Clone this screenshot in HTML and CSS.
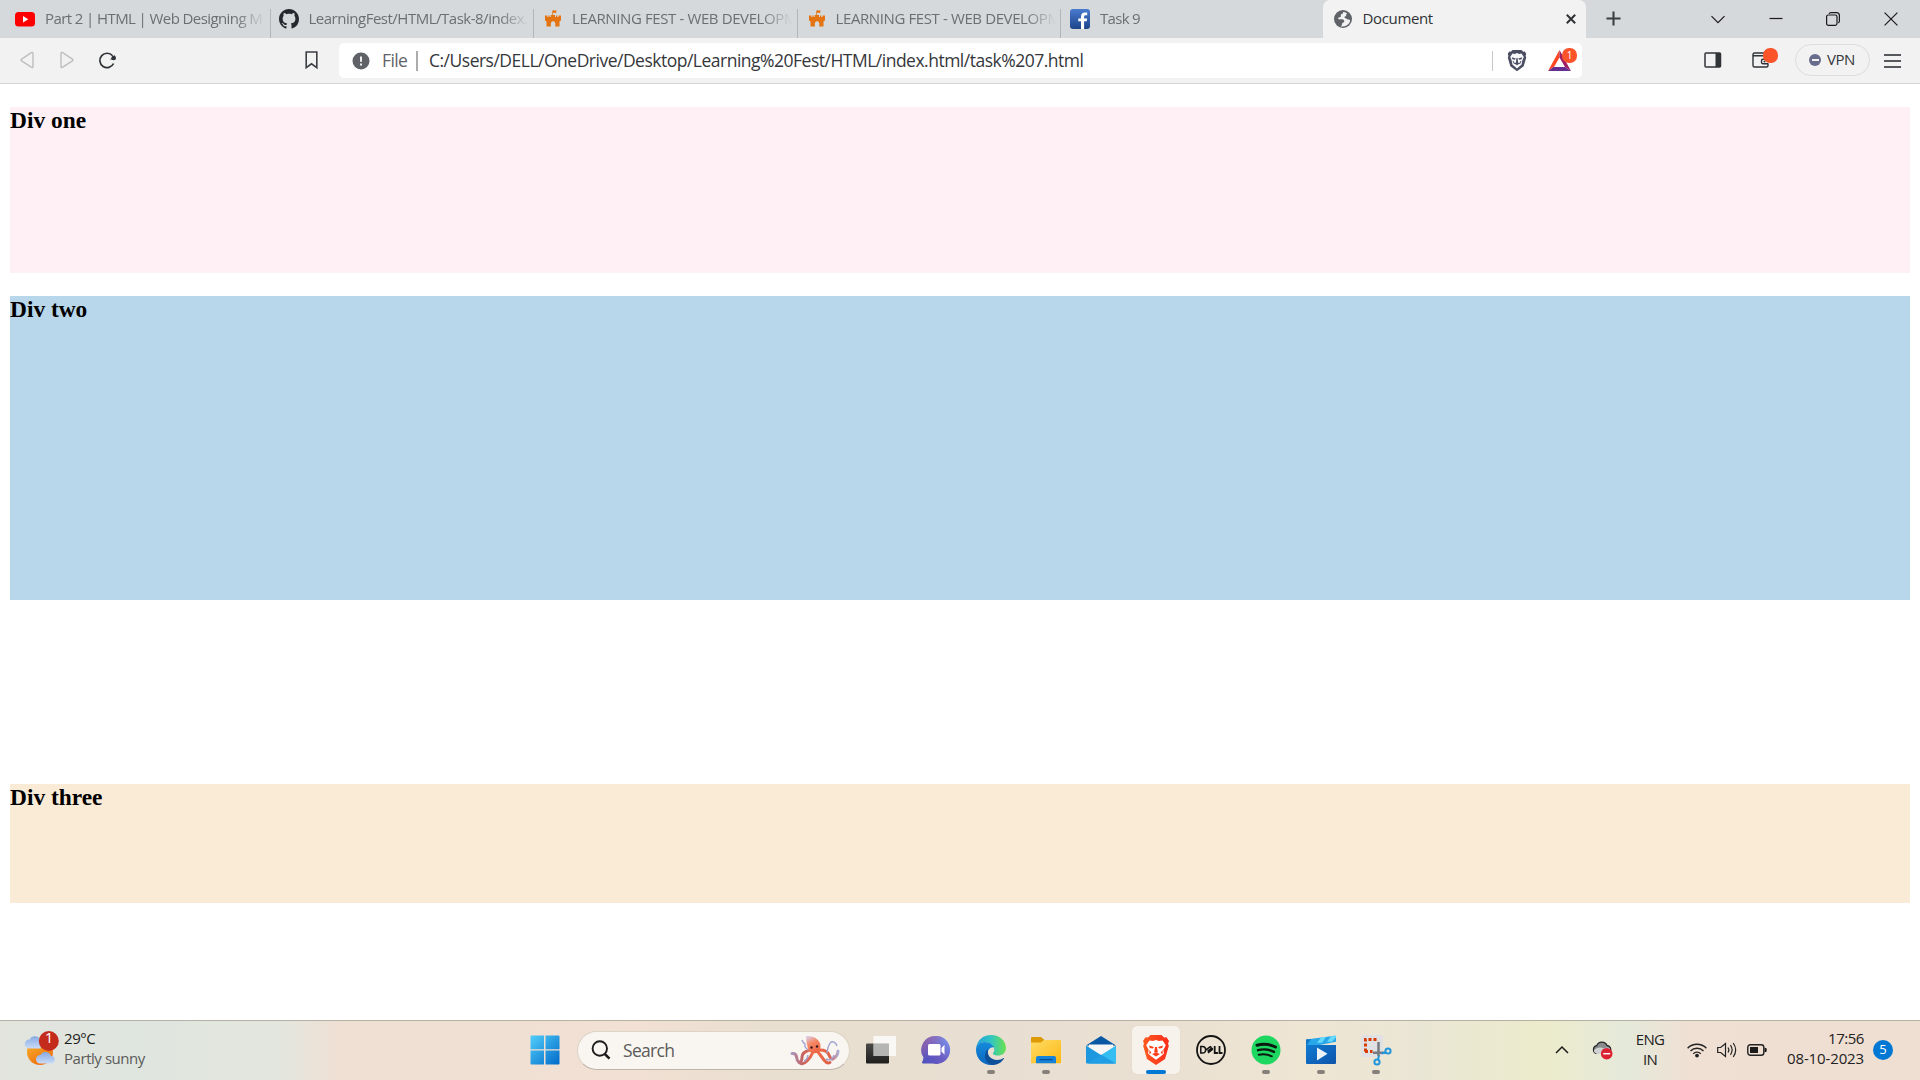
FILE: index.html
```html
<!DOCTYPE html>
<html lang="en">
<head>
<meta charset="utf-8">
<title>Document</title>
<link rel="stylesheet" href="styles.css">
</head>
<body>
<div class="tabs">
  <div class="tab">
    <svg class="fav" viewBox="0 0 20 20"><rect x="0" y="3" width="20" height="14.5" rx="3.5" fill="#f00"/><path d="M8 7l5.3 3.2L8 13.4z" fill="#fff"/></svg>
    <span class="tab-title t-part">Part 2 | HTML | Web Designing M</span>
  </div>
  <div class="tab">
    <svg class="fav" viewBox="0 0 16 16"><path fill="#24292f" d="M8 0C3.58 0 0 3.58 0 8c0 3.54 2.29 6.53 5.47 7.59.4.07.55-.17.55-.38 0-.19-.01-.82-.01-1.49-2.01.37-2.53-.49-2.69-.94-.09-.23-.48-.94-.82-1.13-.28-.15-.68-.52-.01-.53.63-.01 1.08.58 1.23.82.72 1.21 1.87.87 2.33.66.07-.52.28-.87.51-1.07-1.78-.2-3.64-.89-3.64-3.95 0-.87.31-1.59.82-2.15-.08-.2-.36-1.02.08-2.12 0 0 .67-.21 2.2.82.64-.18 1.32-.27 2-.27s1.36.09 2 .27c1.53-1.04 2.2-.82 2.2-.82.44 1.1.16 1.92.08 2.12.51.56.82 1.27.82 2.15 0 3.07-1.87 3.75-3.65 3.95.29.25.54.73.54 1.48 0 1.07-.01 1.93-.01 2.2 0 .21.15.46.55.38A8.01 8.01 0 0 0 16 8c0-4.42-3.58-8-8-8z"/></svg>
    <span class="tab-title t-learn">LearningFest/HTML/Task-8/index.</span>
  </div>
  <div class="tab">
    <svg class="fav castle" viewBox="0 0 20 20"><path fill="#e37411" d="M9.300 1.500c1.400-1 2.600.6 4-.4v2.600c-1.400 1-2.200-.2-3.200.3v2h1.900v2h1v-1.500h1.200v1.500h1.300v-1.500H18v5l-1.500 1V17.500h-4.200v-3a2.200 2.200 0 0 0-4.400 0v3H3.500v-5l-1.500-1v-5h2.300V8h1.200V6.500h1.200V8h1V6h1.600z"/></svg>
    <span class="tab-title t-fest">LEARNING FEST - WEB DEVELOPM</span>
  </div>
  <div class="tab">
    <svg class="fav castle" viewBox="0 0 20 20"><path fill="#e37411" d="M9.300 1.500c1.400-1 2.600.6 4-.4v2.600c-1.400 1-2.200-.2-3.200.3v2h1.900v2h1v-1.500h1.200v1.500h1.300v-1.500H18v5l-1.500 1V17.500h-4.200v-3a2.200 2.200 0 0 0-4.400 0v3H3.500v-5l-1.500-1v-5h2.300V8h1.200V6.500h1.200V8h1V6h1.600z"/></svg>
    <span class="tab-title t-fest">LEARNING FEST - WEB DEVELOPM</span>
  </div>
  <div class="tab fb">
    <svg class="fav" viewBox="0 0 20 20"><defs><linearGradient id="fb" x2="0" y2="1"><stop stop-color="#4a7bd0"/><stop offset="1" stop-color="#1c4489"/></linearGradient></defs><rect width="20" height="20" rx="3" fill="url(#fb)"/><path fill="#fff" d="M11 20v-7.700H8.300V9.500H11V7.600C11 4.800 12.600 3.500 15 3.500h2.200v2.800h-1.600c-1.200 0-1.500.6-1.500 1.500v1.700h3l-.4 2.800h-2.600V20z"/></svg>
    <span class="tab-title t-nine">Task 9</span>
  </div>
  <div class="tab active">
    <svg class="fav" viewBox="0 0 20 20"><circle cx="10" cy="10" r="9" fill="#5f6368"/><path fill="#f2f2f2" d="M9.500 2.800c1 .2.700 1.500 0 2-.8.400-1.800.4-1.700 1.500.2 1 .4 1.300-.5 1.800-1 .5-1.600.2-2.100 1.100-.3.700.6 1.200 1.600 1.200 1.600 0 3.500-.3 4.300 1.100.7 1.200-.3 1.900-1.400 2.200-.9.400-.4 1.500-.8 2.400-.3.700-1 1.100-1.600.8l1.400.5c2.900.3 6.300-1.300 7.900-4 .6-1.100.5-2.300.1-2.700-.7-.5-2 .1-2.800-.7-.9-.8-2.300-.8-2.500-1.700-.2-1 1.600-.9 1.800-1.900.2-.8 0-1.400.8-1.900-1-.9-3-1.700-4.500-1.700z"/></svg>
    <span class="tab-title t-doc">Document</span>
    <svg class="tab-close" viewBox="0 0 10 10"><path d="M.8.8l8.400 8.400M9.200.8L.8 9.200" stroke="#303236" stroke-width="2"/></svg>
  </div>
  <svg class="plus" viewBox="0 0 16 16"><path d="M8 .5v15M.5 8h15" stroke="#3b3e42" stroke-width="2.200"/></svg>
  <div class="win">
    <svg viewBox="0 0 14 14"><path d="M.5 4.200L7 10.700l6.500-6.500"/></svg>
    <svg viewBox="0 0 14 14"><path d="M.5 6.500h13"/></svg>
    <svg viewBox="0 0 14 14"><rect x=".6" y="3" width="10.400" height="10.400" rx="1.800"/><path d="M3 1.800Q3.600.6 5 .6h5.500q2.900 0 2.900 2.900V9q0 1.500-1.200 2"/></svg>
    <svg viewBox="0 0 14 14"><path d="M.6.6l12.800 12.800M13.400.6L.6 13.400"/></svg>
  </div>
</div>

<div class="toolbar">
  <svg class="nav" viewBox="0 0 18 18"><path d="M13.300 1.600Q15 .8 15 2.600v12.800q0 1.800-1.700.8L3.600 9.800q-1.200-.8 0-1.600z" fill="none" stroke="#bdbec0" stroke-width="1.400"/></svg>
  <svg class="nav" viewBox="0 0 18 18"><path d="M4.700 1.600Q3 .8 3 2.600v12.800q0 1.800 1.700.8l9.700-6.400q1.200-.8 0-1.600z" fill="none" stroke="#bdbec0" stroke-width="1.400"/></svg>
  <svg class="nav" viewBox="0 0 18 18"><path d="M15.600 12.500A7.200 7.200 0 1 1 14.600 4.800" fill="none" stroke="#2f3237" stroke-width="1.700"/><circle cx="15.700" cy="7" r="2.300" fill="#2f3237"/><path d="M17 4v4.500h-5z" fill="#2f3237"/></svg>
  <svg class="bookmark" viewBox="0 0 13 18"><path d="M1.200 1h10.600v15.600L6.500 12.800 1.200 16.600z" fill="none" stroke="#3b3e44" stroke-width="1.600"/></svg>
  <div class="url">
    <svg class="info" viewBox="0 0 18 18"><circle cx="9" cy="9" r="8.500" fill="#5f6368"/><path d="M9 4.500v5.300M9 11.400v2" stroke="#fff" stroke-width="1.800"/></svg>
    <span class="file">File</span>
    <i class="bar"></i>
    <span class="path">C:/Users/DELL/OneDrive/Desktop/Learning%20Fest/HTML/index.html/task%207.html</span>
    <i class="bar thin"></i>
    <svg class="shield" viewBox="0 0 20 23"><path d="M5.500 1h9l1.700 1.800 1.600-.2 1.500 2.500-.7 1.600.6 2-2.500 8.500L10 22.300l-6.700-5.100L.8 8.700l.6-2-.7-1.600 1.500-2.500 1.600.2z" fill="#4b4d63"/><path d="M5.500 4.500l2.300.5L10 4l2.200 1 2.300-.5 2.300 3.500-1.400 3.200-.8 4.300L10 19.400l-4.600-3.900-.8-4.300L3.200 8z" fill="#f8f8fa"/><path d="M4.800 8.200l4 1.400-1 1.100-2.400-.4zM15.200 8.200l-4 1.400 1 1.100 2.400-.4zM9.400 9h1.200l.5 4.600h-2.200zM7 14.200l3-.9 3 .9-3 2.100z" fill="#4b4d63"/><path d="M6 12l1.500 3M14 12l-1.500 3" stroke="#4b4d63"/></svg>
    <div class="bat">
      <svg viewBox="0 0 23 21"><path d="M11.500 0v7.500L6 17H5.500L0 21z" fill="#ff4724"/><path d="M11.500 0L23 21l-6-4-5.500-9.500z" fill="#9e1f63"/><path d="M0 21l5.500-4h11.500l6 4z" fill="#662d91"/></svg>
      <b class="badge">1</b>
    </div>
  </div>
  <svg class="side" viewBox="0 0 18 16"><rect x="1" y="1" width="15.500" height="14" rx="1" fill="none" stroke="#303338" stroke-width="1.500"/><path d="M11.500 1h5v14h-5z" fill="#303338"/></svg>
  <div class="wallet">
    <svg viewBox="0 0 18 16"><path d="M16 5V3.500M1 2.500v11q0 1.500 1.500 1.500h12q1.500 0 1.500-1.500V12M1 2.500Q1 1 2.500 1H15M1 3.800h15V7M16.500 7.200H11q-1.500 0-1.500 1.500v1.600q0 1.500 1.500 1.500h5.500" fill="none" stroke="#303338" stroke-width="1.400"/><circle cx="12.500" cy="9.500" r="1" fill="#303338"/></svg>
    <b class="badge"></b>
  </div>
  <div class="vpn"><i></i><span>VPN</span></div>
  <div class="menu"><i></i><i></i><i></i></div>
</div>

<main class="page">
  <section class="box one"><h3>Div one</h3></section>
  <section class="box two"><h3>Div two</h3></section>
  <section class="box three"><h3>Div three</h3></section>
</main>

<footer class="taskbar">
  <div class="weather">
    <svg viewBox="0 0 36 36"><defs><linearGradient id="sun" x1="0" y1="0" x2=".6" y2="1"><stop stop-color="#f9b82b"/><stop offset="1" stop-color="#ee6f12"/></linearGradient><linearGradient id="cl" x2="0" y2="1"><stop stop-color="#87a9e2"/><stop offset="1" stop-color="#c9dcf8"/></linearGradient></defs><circle cx="16" cy="21" r="13" fill="url(#sun)"/><path d="M5 17.500a4.500 4.500 0 0 1 .5-9 6 6 0 0 1 11.200 1.200V17.500z" fill="url(#cl)"/><path d="M16 32.500a4.200 4.200 0 0 1 .4-8.400 5.800 5.800 0 0 1 10.600 1 3.700 3.700 0 0 1 0 7.400z" fill="url(#cl)"/><circle cx="24.800" cy="10" r="10" fill="#c42b1c"/></svg>
    <b class="alert">1</b>
    <div class="lines"><span class="deg">29°C</span><span class="sunny">Partly sunny</span></div>
  </div>

  <svg class="start" viewBox="0 0 30 30"><defs><linearGradient id="win" gradientUnits="userSpaceOnUse" x1="0" y1="0" x2="30" y2="30"><stop stop-color="#52d0fb"/><stop offset="1" stop-color="#0068c8"/></linearGradient></defs><path d="M1.500.5H14v13.700H.5V1.500q0-1 1-1zM15.500.5H28.500q1 0 1 1v12.700h-14zM.5 15.600H14v13.900H1.500q-1 0-1-1zM15.500 15.600h14v12.900q0 1-1 1h-13z" fill="url(#win)"/></svg>
  <div class="search">
    <svg class="lens" viewBox="0 0 20 20"><circle cx="8.800" cy="8.500" r="7.200" fill="none" stroke="#1d1d1d" stroke-width="1.900"/><path d="M13.800 14l4.700 4.700" stroke="#1d1d1d" stroke-width="2.500"/></svg>
    <span>Search</span>
    <svg class="octo" viewBox="0 0 48 30"><defs><linearGradient id="oc" x1=".2" x2=".7" y2="1"><stop stop-color="#dccbe6"/><stop offset=".4" stop-color="#f58a68"/><stop offset="1" stop-color="#ee6440"/></linearGradient><linearGradient id="arm" gradientUnits="userSpaceOnUse" x1="0" x2="48" y1="0" y2="0"><stop stop-color="#a99bc4"/><stop offset=".25" stop-color="#c8605c"/><stop offset=".5" stop-color="#f4704a"/><stop offset=".8" stop-color="#dd6048"/><stop offset="1" stop-color="#a9b4dd"/></linearGradient></defs><g fill="none" stroke-linecap="round" stroke="url(#arm)"><path d="M19 15Q11 17 11 22T8 27.500Q6 26 5.500 22T1 18.500M22 17q-2 5-6 9t-7 2M27 17q3 4 6 8t6 2.500M29 15q7 0 9 5t4 4q5-3 5-8" stroke-width="3"/></g><path d="M18 15q-5-2-4-6-2-1-3-4M36 18q1-8 4-11 4-1 6 4M35 24q6 3 8-4M17 20q-1 5-4 6" fill="none" stroke="#a3a3d2" stroke-width="1.400"/><path d="M15 1q10-1 14 7 2 7-3 10-8 1-9-4-2-7-2-13z" fill="url(#oc)"/><circle cx="20.500" cy="12.500" r="1.200" fill="#351a22"/><circle cx="26" cy="11.500" r="1.200" fill="#351a22"/></svg>
  </div>
  <nav class="apps">
    <div class="app"><svg viewBox="0 0 30 30"><defs><linearGradient id="dk" x2="0" y2="1"><stop stop-color="#4a4a48"/><stop offset="1" stop-color="#1e1e1d"/></linearGradient></defs><rect y="8.500" width="23" height="20" rx="1" fill="url(#dk)"/><path d="M8.500 1h20.500q1 0 1 1v18q0 1-1 1H7.500V2q0-1 1-1z" fill="#fff" fill-opacity=".78"/><path d="M7.500 8.500H23V21H7.500z" fill="#a9a9a7" fill-opacity=".75"/></svg></div>
    <div class="app"><svg viewBox="0 0 30 30"><defs><linearGradient id="tm" x1="0" y1="1" x2="1" y2="0"><stop stop-color="#4a50bd"/><stop offset=".45" stop-color="#6b5bc2"/><stop offset="1" stop-color="#7d9cf2"/></linearGradient><linearGradient id="tm2" x2="1" y2="1"><stop stop-color="#9c66a4"/><stop offset=".5" stop-color="#9c66a4" stop-opacity="0"/></linearGradient></defs><path d="M15.500 1a14 14 0 1 1-4 27.500H2q-1 0-1-1 1-2 1.500-5A14 14 0 0 1 15.500 1z" fill="url(#tm)"/><path d="M15.500 1a14 14 0 1 1-4 27.500H2q-1 0-1-1 1-2 1.500-5A14 14 0 0 1 15.500 1z" fill="url(#tm2)"/><rect x="7" y="9" width="12.500" height="11.500" rx="1.500" fill="#fff"/><path d="M20.500 13l3-3.200v10l-3-3.200z" fill="#fff"/></svg></div>
    <div class="app run"><svg viewBox="0 0 30 30"><defs><linearGradient id="e1" x2="1"><stop stop-color="#239edb"/><stop offset=".5" stop-color="#31c5c1"/><stop offset="1" stop-color="#6ae24e"/></linearGradient><linearGradient id="e2" x2="0" y2="1"><stop stop-color="#158bdc"/><stop offset="1" stop-color="#0b66bd"/></linearGradient></defs><path d="M0 14C1 5 7 0 15 0c9 0 15 6 15 13 0 5-4 7.500-8 7.500-4 0-5.500-1.500-5-2.500.6-1 2-2 1-4.500C17 10 13 7 8.500 7 4 7 1 10 0 14z" fill="url(#e1)"/><path d="M0 15C0 10 4 7 8.500 7c5 0 8.500 3 9.500 5.500-3-1-7 2-6.500 7C12 25 16 29 19 29.500 9 32 0 25 0 15z" fill="url(#e2)"/><path d="M12.500 13.500C10 20 15 25 21 25c3 0 5-1 6.500-2 .6-.2.700.2.500.6C25 28.500 20 30.500 15.500 29.800 8 27 7 18 12.500 13.500z" fill="#0d4f99"/></svg></div>
    <div class="app run"><svg viewBox="0 0 30 30"><defs><linearGradient id="fo" x2="1" y2="1"><stop stop-color="#ffdc66"/><stop offset="1" stop-color="#fdb813"/></linearGradient></defs><path d="M0 3q0-1 1-1h9l3 2.500v4H0z" fill="#dd9a06"/><path d="M0 7.500h10l3-2.500h16q1 0 1 1v21.500q0 .8-1 .8H0z" fill="url(#fo)"/><path d="M5 28.300V23q0-2 2-2h16q2 0 2 2v5.300z" fill="#1583d9"/><path d="M9 24.700h12" stroke="#0a4f96" stroke-width="1.300" stroke-linecap="round"/></svg></div>
    <div class="app"><svg viewBox="0 0 30 30"><path d="M0 10.500L15 1l15 9.500z" fill="#0a58a4"/><path d="M3 9.500h24v10H3z" fill="#f8f7f5"/><path d="M0 10.500l18 11.500L30 28.500H1q-1 0-1-1z" fill="#1d98de"/><path d="M30 10.500v17q0 1-1 1H2z" fill="#36bdf2"/><path d="M15 19.500L30 28.500H2z" fill="#188edb" fill-opacity=".65"/></svg></div>
    <div class="app current"><svg viewBox="0 0 30 30"><defs><linearGradient id="br" x2="1"><stop stop-color="#ff5a1f"/><stop offset="1" stop-color="#fa2c1a"/></linearGradient></defs><path d="M9.500 0h11l2.500 2.500 2.500-.3L28 6l-1 2.500.8 2.500-3.800 13-9 6-9-6L2.200 11 3 8.500 2 6l2.500-3.800 2.500.3z" fill="url(#br)"/><path d="M8.500 5.500l3.500.6L15 5l3 1.100 3.500-.6 3.300 4.800-2.500 4.700.7 3.600-3.500 3L15 24.800l-4.500-3.200-3.500-3 .7-3.600-2.500-4.700z" fill="#fff"/><path d="M8 10.500l5 1.500-1.200 1.600-3-.7zM22 10.500l-5 1.500 1.200 1.600 3-.7zM14 12h2l.9 5.500h-3.800zM11 19l4-1.500 4 1.500-4 2.500zM8.500 15l2 3-2.200 1zM21.500 15l-2 3 2.200 1z" fill="#fb3f1b"/></svg></div>
    <div class="app dell"><svg viewBox="0 0 30 30"><circle cx="15" cy="15" r="14" fill="none" stroke="#141414" stroke-width="1.800"/><path d="M4.800 11.500h1.600q3.200 0 3.200 3.300T6.400 18H4.800zM10 14.900l4.200-3.300 1.300 1M11.500 16.300l4-3.100 1.300 1M12 17.800l4.800-3.600M16.500 13l-4 3.200" fill="none" stroke="#141414" stroke-width="1.500"/><path d="M18.700 11v7h3.200M23.500 11v7h3" fill="none" stroke="#141414" stroke-width="1.800"/></svg></div>
    <div class="app run"><svg viewBox="0 0 30 30"><circle cx="15" cy="15" r="14.500" fill="#1ed760"/><g fill="none" stroke="#0b1a10" stroke-linecap="round"><path d="M6 10.200q10-2.500 18.500 1.800" stroke-width="3"/><path d="M7 15.200q8.500-2.200 16 1.700" stroke-width="2.400"/><path d="M7.800 19.700q7-1.500 13 1.600" stroke-width="2"/></g></svg></div>
    <div class="app run"><svg viewBox="0 0 30 30"><defs><linearGradient id="mv" x2="1" y2="1"><stop stop-color="#0f7ad0"/><stop offset="1" stop-color="#0f54ab"/></linearGradient></defs><path d="M0 4.500L29 .7q1-.1 1 .8v5.200L14 10H0z" fill="#28a7ea"/><path d="M15 2.500l5-.6-4 5.900h-5zM25 1.200l5-.6v2l-4 4.200h-5z" fill="#66d9fb"/><path d="M0 4.500l5-.6-4 6H0z" fill="#1477c4"/><path d="M0 10h30v18q0 1-1 1H1q-1 0-1-1z" fill="url(#mv)"/><path d="M11 12.500l10.500 6.300L11 25.500z" fill="#eef3fa"/></svg></div>
    <div class="app run"><svg viewBox="0 0 30 30"><rect x="0" y="0" width="22" height="22" rx="2.500" fill="#dfe1e5"/><path d="M4.500 16.500v-12h13" fill="none" stroke="#d83b01" stroke-width="3" stroke-dasharray="3 2"/><path d="M4 16.500h7.500" stroke="#d83b01" stroke-width="3" stroke-dasharray="3 2"/><path d="M17.500 7v14M12 17.800h12" stroke="#777b80" stroke-width="2.500"/><g fill="none" stroke="#2196dd" stroke-width="2"><circle cx="27" cy="16" r="2.600"/><circle cx="16" cy="27" r="2.600"/><path d="M24.500 17.500l-4 1M17 24.500l1-4"/></g></svg></div>
  </nav>

  <div class="tray">
    <svg class="up" viewBox="0 0 14 8"><path d="M1 7l6-6 6 6" fill="none" stroke="#1c1c1c" stroke-width="1.500"/></svg>
    <svg class="cloud" viewBox="0 0 21 19"><path d="M4.500 12.500a4 4 0 0 1 .2-7.800 5.600 5.600 0 0 1 10.300-.2 4.300 4.300 0 0 1 3.500 6" fill="#8a8c8e" stroke="#262626" stroke-width="1.300"/><path d="M4.500 12.500q-3-1-2.500-3.500 5-4 10-1.500 3-2 6 0v5z" fill="#d0d1d2"/><circle cx="14.700" cy="12.700" r="5.800" fill="#dc2130"/><path d="M11.200 12.700h7" stroke="#fff" stroke-width="1.500"/></svg>
    <div class="lang"><span>ENG</span><span>IN</span></div>
    <svg class="wifi" viewBox="0 0 20 16"><g fill="none" stroke="#222" stroke-width="1.400"><path d="M.6 6.200a13.300 13.300 0 0 1 18.800 0M3.500 9a9.200 9.200 0 0 1 13 0M6.300 11.700a5.200 5.200 0 0 1 7.400 0"/></g><circle cx="10" cy="13.600" r="1.900" fill="#222"/></svg>
    <svg class="sound" viewBox="0 0 20 16"><g fill="none" stroke="#222" stroke-width="1.200"><path d="M.7 5.500h3L8.500 1.500v13l-4.800-4h-3z"/><path d="M11 5.500q1.800 2.500 0 5M13.500 3.200q3.200 4.800 0 9.600M16.200 1q5 7 0 14"/></g></svg>
    <svg class="batt" viewBox="0 0 20 12"><rect x=".8" y=".8" width="16" height="10.400" rx="2.500" fill="none" stroke="#222" stroke-width="1.400"/><path d="M3 3h8v6H3zM17.500 3.500l2.200 1v3l-2.200 1z" fill="#1a1a1a"/></svg>
    <div class="clock"><span class="hm">17:56</span><span class="date">08-10-2023</span></div>
    <b class="count">5</b>
  </div>
</footer>
</body>
</html>
```
FILE: styles.css
```css
*{box-sizing:border-box}
body{
  margin:0;width:1920px;height:1080px;overflow:hidden;background:#fff;
  display:flex;flex-direction:column;
  font-family:"Open Sans","Noto Sans",sans-serif;font-size:15px;line-height:20px;
  letter-spacing:-.45px;color:#222;white-space:nowrap;
}
svg{display:block;flex:none;overflow:visible}

/* tab strip */
.tabs{height:38px;background:#d5d9dc;display:flex;padding-left:6px}
.tab{width:263.5px;flex:none;height:38px;display:flex;align-items:center;padding-left:9px;position:relative}
.tab+.tab:not(.active)::before{content:"";align-self:flex-end;width:1px;height:29px;background:#b3b6b8;margin-left:-9px;margin-right:8px}
.fav{width:20px;height:20px}
.castle{margin:0 -1px 0 1px}
.fb .fav{margin-left:1px}
.tab-title{margin-left:10px;padding-bottom:2px;width:224px;color:#6b6f73;-webkit-mask-image:linear-gradient(90deg,#000 190px,transparent 220px);mask-image:linear-gradient(90deg,#000 190px,transparent 220px)}
.t-part{letter-spacing:-.59px}
.t-learn{letter-spacing:-.49px}
.t-fest{letter-spacing:-.39px}
.t-nine{letter-spacing:-.7px}
.active{background:#f2f2f2;border-radius:7px 7px 0 0;padding-left:10px;margin-left:-1px}
.active .tab-title{width:194px;color:#303236;letter-spacing:-.35px;-webkit-mask-image:none;mask-image:none}
.tab-close{width:10px;height:10px;margin-left:9px}
.plus{width:15px;height:15px;margin:11px 0 0 20px}
.win{display:flex;gap:43.5px;margin:12px 0 0 90px}
.win svg{width:14px;height:14px;fill:none;stroke:#1a1a1a;stroke-width:1.2}

/* toolbar */
.toolbar{height:46px;flex:none;background:#f2f2f2;border-bottom:1px solid #d3d4d5;display:flex;align-items:center;padding-left:18px}
.nav{width:18px;height:18px;margin-right:22px;margin-bottom:1px}
.bookmark{width:13px;height:18px;margin:0 21px 1px 167px}
.url{width:1243px;height:35px;background:#fff;border-radius:5px;display:flex;align-items:center;padding-left:13px;font-size:17.5px;flex:none}
.info{width:18px;height:18px}
.file{margin-left:12px;padding-bottom:2px;width:31px;color:#5f6368;letter-spacing:-.65px}
.bar{width:2px;height:20px;background:#aaacae;margin-left:3px}
.path{margin-left:11px;padding-bottom:2px;width:1063px;color:#35373b;letter-spacing:-.5px}
.bar.thin{width:1px;margin-left:0;background:#c6c7c9}
.shield{width:20px;height:23px;margin-left:14px}
.bat{position:relative;margin-left:21px}
.bat svg{width:23px;height:21px}
.badge{position:absolute;width:15px;height:15px;border-radius:7px;background:#fb542b;color:#fff;font-size:10px;font-weight:400;line-height:15px;text-align:center;letter-spacing:0}
.bat .badge{left:14px;top:-2px}
.side{width:18px;height:16px;margin-left:122px;margin-bottom:1px}
.wallet{position:relative;margin-left:30px;margin-bottom:1px}
.wallet svg{width:18px;height:16px}
.wallet .badge{left:11px;top:-4px}
.vpn{width:75px;height:32px;margin:0 0 1px 25px;border:1px solid #dcdddf;border-radius:16px;display:flex;align-items:center;padding-left:13px;letter-spacing:-.5px;color:#35373c}
.vpn span{padding-bottom:2px}
.vpn i{width:12px;height:12px;border-radius:6px;background:linear-gradient(#f2f2f2,#f2f2f2) center/7px 2px no-repeat #686d8b;margin-right:6px}
.menu{display:flex;flex-direction:column;gap:4px;margin-left:14px}
.menu i{width:17px;height:2px;background:#55585c}

/* page */
.page{flex:1;padding:23px 10px 0;white-space:normal}
.box{letter-spacing:0;font-family:"Liberation Serif",serif;color:#000}
.box h3{margin:0;font-size:23.4px;line-height:27px}
.one{height:166px;background:#fff0f5}
.two{height:304px;margin-top:23px;background:#b8d7ea}
.three{height:119px;margin-top:184px;background:#faebd7}

/* taskbar */
.taskbar{height:60px;flex:none;border-top:1px solid #b5b0a6;display:flex;align-items:center;padding-bottom:1px;
  background:linear-gradient(90deg,#e3e4de 0,#dfe6df 130px,#e3e6de 280px,#efe0d3 340px,#f1e0d3 640px,#e8dfd0 780px,#e8dfd2 1000px,#eae0d2 1150px,#efe5d3 1300px,#eae6d5 1420px,#ecebcb 1545px,#e5e9da 1630px,#efe0d3 1690px,#efded2 1920px)}
.weather{display:flex;align-items:center;position:relative;width:505px;padding-left:24px}
.weather svg{width:36px;height:36px;margin-top:-3px}
.alert{position:absolute;left:39px;top:-1px;width:20px;text-align:center;color:#fff;font-weight:400;letter-spacing:0}
.lines{display:flex;flex-direction:column;margin-left:4px;padding-bottom:4px;color:#1c1c1c}
.sunny{color:#5a5b59}
.start{width:30px;height:30px;margin:0 17px 0 25px}
.search{width:273px;height:39px;border-radius:20px;background:#f9f6f2;border:1px solid #ddd3c7;border-bottom-color:#bdb4aa;display:flex;align-items:center;padding-left:13px}
.search span{font-size:17.5px;color:#5c5b59;margin:0 0 1px 12px;width:168px;letter-spacing:-.7px}
.lens{width:20px;height:20px}
.octo{width:48px;height:30px}
.apps{display:flex;margin-left:3px}
.app{width:55px;height:48px;display:flex;align-items:center;justify-content:center;position:relative}
.app svg{width:30px;height:30px}
.run::after,.current::after{content:"";position:absolute;bottom:0;left:23.5px;width:8px;height:4px;border-radius:2px;background:#86807a}
.current{width:48px;margin:0 3px 0 4px;background:#f7f2ec;border-radius:5px;box-shadow:0 0 1px #cfc6ba}
.current::after{left:14px;width:20px;background:#0078d4}
.tray{display:flex;align-items:center;margin-left:152px}
.up{width:14px;height:8px}
.cloud{width:21px;height:19px;margin-left:23px;margin-top:1px}
.lang{display:flex;flex-direction:column;align-items:center;width:40px;margin-left:17px;padding-bottom:2px;letter-spacing:-.7px}
.wifi{width:20px;height:16px;margin-left:17px}
.sound{width:20px;height:16px;margin-left:10px}
.batt{width:20px;height:12px;margin-left:10px}
.clock{display:flex;flex-direction:column;align-items:flex-end;width:90px;margin-left:7px;padding-bottom:4px}
.date{letter-spacing:-.13px}
.count{width:20px;height:20px;border-radius:10px;background:#0078d4;color:#fff;font-size:13px;line-height:19px;font-weight:400;text-align:center;margin-left:9px;letter-spacing:0}
```
